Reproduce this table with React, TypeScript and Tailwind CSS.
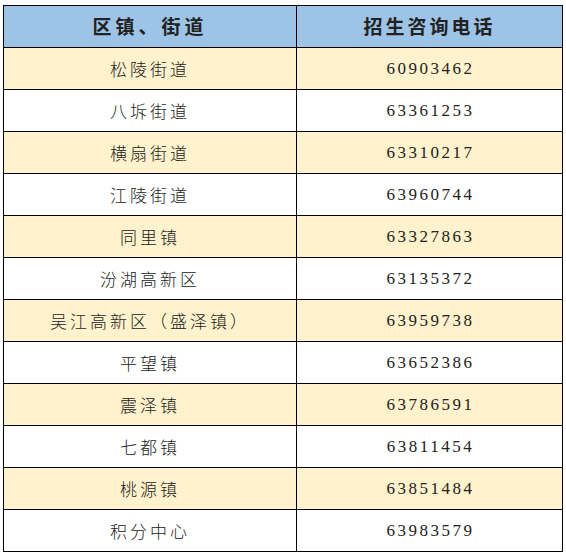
import React from "react";

const rows: [string, string][] = [
  ["松陵街道", "60903462"],
  ["八坼街道", "63361253"],
  ["横扇街道", "63310217"],
  ["江陵街道", "63960744"],
  ["同里镇", "63327863"],
  ["汾湖高新区", "63135372"],
  ["吴江高新区（盛泽镇）", "63959738"],
  ["平望镇", "63652386"],
  ["震泽镇", "63786591"],
  ["七都镇", "63811454"],
  ["桃源镇", "63851484"],
  ["积分中心", "63983579"],
];

const cjk = "[font-family:Noto_Sans_CJK_SC]";
const num = "[font-family:Liberation_Serif]";

export default function App() {
  return (
    <div className="w-[566px] h-[554px] bg-white pl-[3px] pt-[5px]">
      <div className="grid w-[560px] grid-cols-[293px_266px] border-l border-t border-black text-[#222]">
        <div className={"flex h-[42px] items-center justify-center border-b border-r border-black bg-[#9dc3e6] text-[19px] font-bold tracking-[4px] " + cjk}>
          区镇、街道
        </div>
        <div className={"flex h-[42px] items-center justify-center border-b border-r border-black bg-[#9dc3e6] text-[19px] font-bold tracking-[3px] " + cjk}>
          招生咨询电话
        </div>
        {rows.map(([name, phone], i) => {
          const bg = i % 2 === 0 ? "bg-[#fff2cc]" : "bg-white";
          return (
            <React.Fragment key={name}>
              <div className={"flex h-[42px] items-center justify-center border-b border-r border-black text-[17px] font-light tracking-[3px] " + bg + " " + cjk}>
                {name}
              </div>
              <div className={"flex h-[42px] items-center justify-center border-b border-r border-black pl-[2px] text-[17px] tracking-[2.5px] " + bg + " " + num}>
                {phone}
              </div>
            </React.Fragment>
          );
        })}
      </div>
    </div>
  );
}
